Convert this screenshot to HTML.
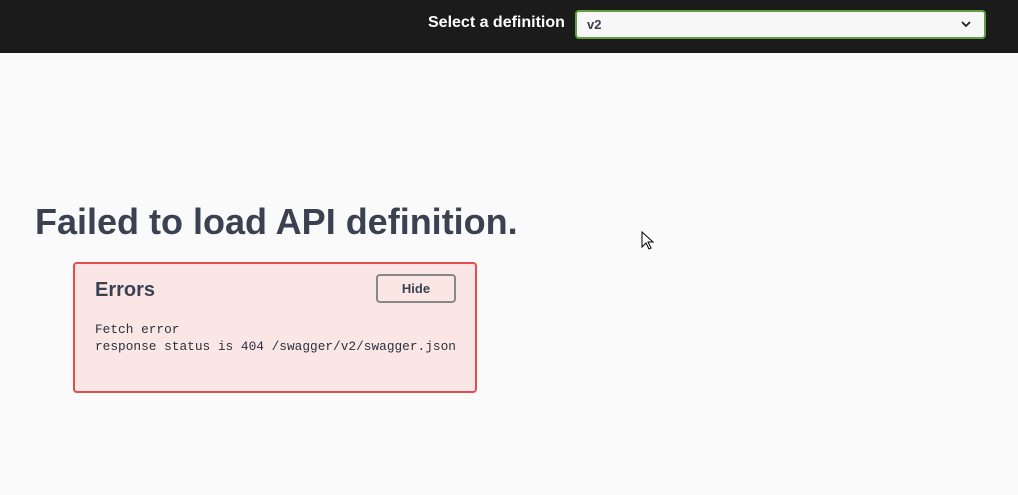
<!DOCTYPE html>
<html><head><style>
body{margin:0;width:1018px;height:495px;background:#fafafa;font-family:"Liberation Sans",Arial,sans-serif;position:relative;overflow:hidden}
.top{position:absolute;left:0;top:0;width:1018px;height:53px;background:#1b1b1b}
.lbl{position:absolute;left:428px;top:14px;color:#fff;font-weight:bold;font-size:16px}
.sel{position:absolute;left:575px;top:10px;width:407px;height:25px;border:2px solid #62a03f;border-radius:4px;background:#f7f7f7;box-sizing:content-box}
.sel span{position:absolute;left:10px;top:5px;font-weight:bold;font-size:13px;color:#3b4151}
.sel svg{position:absolute;right:12px;top:8px}
h1{position:absolute;left:35px;top:201px;margin:0;font-size:36px;font-weight:bold;color:#3b4151}
.err{position:absolute;left:73px;top:262px;width:400px;height:127px;border:2px solid #e44d4d;border-radius:4px;background:#fae7e5}
.err h4{position:absolute;left:20px;top:15px;margin:0;font-size:20px;font-weight:bold;color:#3b4151}
.hide{position:absolute;left:301px;top:10px;width:76px;height:25px;border:2px solid #888;border-radius:4px;font-weight:bold;font-size:13px;color:#3b4151;text-align:center;line-height:25px}
.msg{position:absolute;left:20px;top:57px;font-family:"Liberation Mono","DejaVu Sans Mono",monospace;font-size:12.8px;line-height:17px;color:#2b3141;white-space:pre}
</style></head><body>
<div class="top"></div>
<div class="lbl">Select a definition</div>
<div class="sel"><span>v2</span><svg width="12" height="8" viewBox="0 0 12 8"><path d="M2 2l4 4 4-4" fill="none" stroke="#222" stroke-width="1.8"/></svg></div>
<h1>Failed to load API definition.</h1>
<div class="err"><h4>Errors</h4><div class="hide">Hide</div>
<div class="msg">Fetch error
response status is 404 /swagger/v2/swagger.json</div></div>
<svg style="position:absolute;left:641px;top:231px" width="13" height="20" viewBox="0 0 13 20"><path d="M1 1v15l4-4 3 6 2-1-3-6h5z" fill="#fff" stroke="#000" stroke-width="1"/></svg>
</body></html>
